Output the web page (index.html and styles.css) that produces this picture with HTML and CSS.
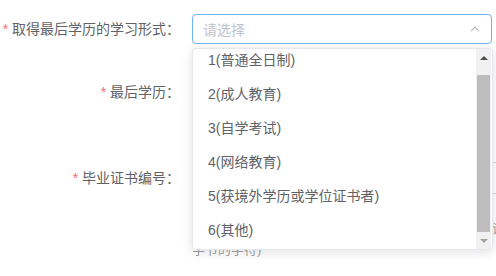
FILE: index.html
```html
<!DOCTYPE html>
<html lang="zh-CN">
<head>
<meta charset="utf-8">
<link rel="stylesheet" href="styles.css">
</head>
<body>
<div class="page">
  <form class="form">
    <div class="row row-1">
      <label class="label"><span class="req">*</span> 取得最后学历的学习形式：</label>
      <div class="select focused">
        <span class="placeholder">请选择</span>
        <svg class="caret" width="10" height="6" viewBox="0 0 10 6"><path d="M1 5.2 L5 1.2 L9 5.2" fill="none" stroke="#b4b8c0" stroke-width="1.2"/></svg>
      </div>
    </div>
    <div class="row row-2">
      <label class="label"><span class="req">*</span> 最后学历：</label>
      <div class="select"></div>
    </div>
    <div class="row row-3">
      <label class="label"><span class="req">*</span> 毕业证书编号：</label>
      <div class="input wide"></div>
    </div>
    <div class="hint">
      <div class="hint-line first">请输入不超过50个</div>
      <div class="hint-line">字节的字符)</div>
    </div>
  </form>

  <div class="dropdown">
    <ul class="options">
      <li>1(普通全日制)</li>
      <li>2(成人教育)</li>
      <li>3(自学考试)</li>
      <li>4(网络教育)</li>
      <li>5(获境外学历或学位证书者)</li>
      <li>6(其他)</li>
    </ul>
    <div class="scrollbar">
      <div class="sb-btn up"><span class="tri-up"></span></div>
      <div class="sb-track"><div class="sb-thumb"></div></div>
      <div class="sb-btn down"><span class="tri-down"></span></div>
    </div>
  </div>
</div>
</body>
</html>
```

FILE: styles.css
```css
* { box-sizing: border-box; }
html, body { margin: 0; padding: 0; background: #fff; }
body {
  font-family: "Liberation Sans", "Noto Sans CJK SC", sans-serif;
  font-size: 14px;
  color: #606266;
}
.page {
  position: relative;
  width: 496px;
  height: 276px;
  overflow: hidden;
}
.form {
  margin: 0;
  padding-top: 14px;
}
.row {
  display: flex;
  align-items: center;
  white-space: nowrap;
}
.row-1 { margin-bottom: 33px; }
.row-2 { margin-bottom: 55px; }
.label {
  flex: 0 0 192px;
  width: 192px;
  padding-right: 12px;
  text-align: right;
  line-height: 30px;
}
.req { color: #f56c6c; }
.select, .input {
  position: relative;
  flex: 0 0 300px;
  width: 300px;
  height: 30px;
  border: 1px solid #dcdfe6;
  border-radius: 4px;
  display: flex;
  align-items: center;
  padding-left: 10px;
}
.select.focused { border-color: #6fb3f7; }
.input.wide { flex: 0 0 340px; width: 340px; height: 32px; }
.placeholder { color: #c0c4cc; }
.caret {
  position: absolute;
  right: 11px;
  top: 11px;
}
.hint {
  margin: 24px 0 0 192px;
  color: #a0a0a0;
  font-size: 13px;
  line-height: 21px;
  white-space: nowrap;
}
.hint-line.first { padding-left: 300px; }
.dropdown {
  position: absolute;
  left: 192px;
  top: 48px;
  width: 301px;
  height: 202px;
  background: #fff;
  border: 1px solid #e4e7ed;
  border-radius: 4px;
  box-shadow: 0 2px 12px rgba(0, 0, 0, 0.12);
  overflow: hidden;
}
.options {
  list-style: none;
  margin: -6px 0 0 0;
  padding: 0;
}
.options li {
  height: 34px;
  line-height: 34px;
  padding-left: 15px;
  white-space: nowrap;
  color: #606266;
}
.scrollbar {
  position: absolute;
  top: 0;
  right: 1px;
  bottom: 0;
  width: 15px;
  background: #f1f1f1;
  display: flex;
  flex-direction: column;
}
.sb-btn {
  flex: 0 0 17px;
  display: flex;
  align-items: center;
  justify-content: center;
}
.sb-track {
  flex: 1;
  display: flex;
  flex-direction: column;
  justify-content: flex-end;
  padding: 0 1px;
}
.sb-thumb {
  height: 157px;
  background: #bdbdbd;
}
.tri-up {
  width: 0; height: 0;
  border-left: 4px solid transparent;
  border-right: 4px solid transparent;
  border-bottom: 4px solid #505050;
}
.tri-down {
  width: 0; height: 0;
  border-left: 4px solid transparent;
  border-right: 4px solid transparent;
  border-top: 4px solid #a3a3a3;
}
```
